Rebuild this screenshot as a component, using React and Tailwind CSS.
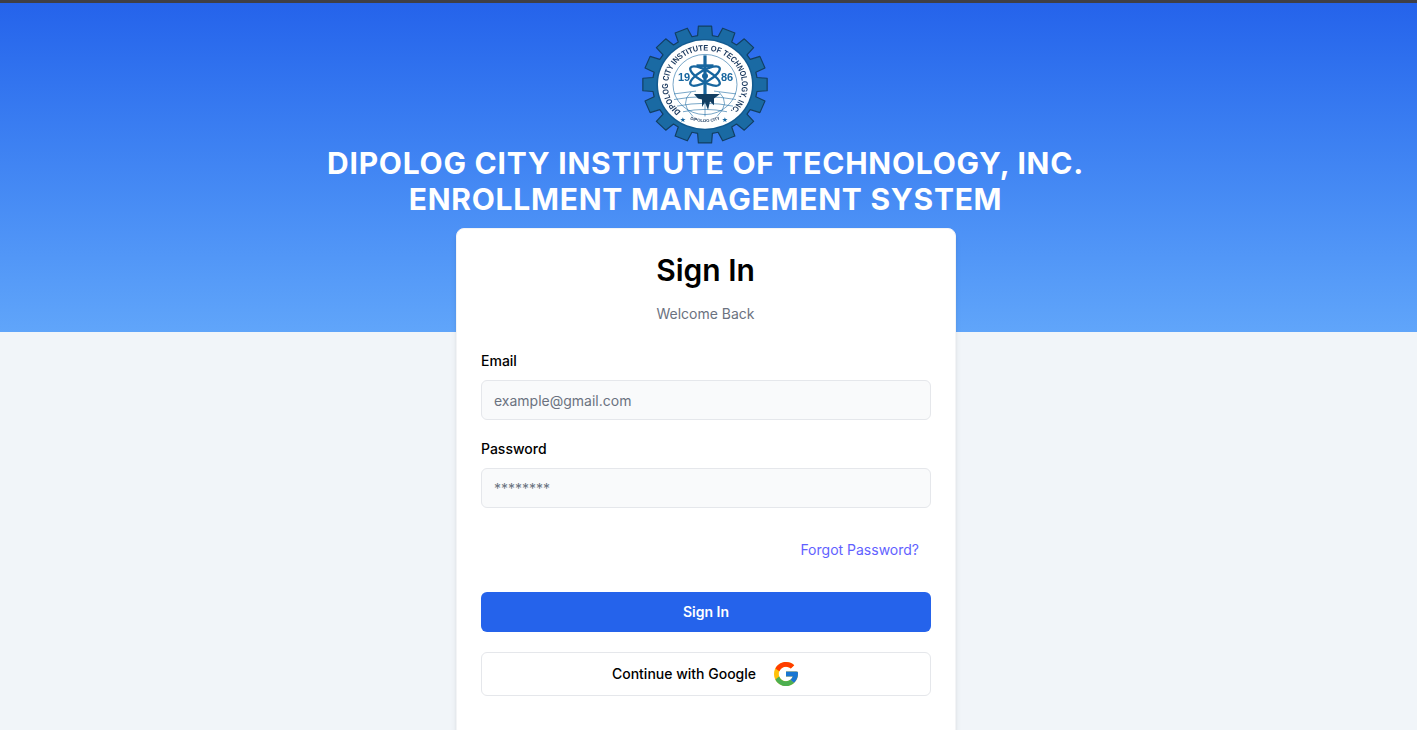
import React from 'react';

const gearPath = () => {
  const teeth = 16;
  const outer = 62.5;
  const root = 52.5;
  const pts = [];
  for (let i = 0; i < teeth; i++) {
    const a = (i / teeth) * Math.PI * 2 - Math.PI / 2;
    const step = (Math.PI * 2) / teeth;
    const p = (r, d) => `${(Math.cos(a + d) * r).toFixed(2)} ${(Math.sin(a + d) * r).toFixed(2)}`;
    pts.push(p(root, -step * 0.36), p(outer, -step * 0.27), p(outer, step * 0.27), p(root, step * 0.36));
  }
  return 'M' + pts.join('L') + 'Z';
};

const Logo = () => (
  <svg width="128" height="128" viewBox="-64 -64 128 128" className="block blur-[0.35px]">
    <defs>
      <path id="ringTop" d="M-24 29 A37 37 0 1 1 24 29" />
      <path id="ringBottom" d="M-15 37 A40 40 0 0 0 15 37" />
    </defs>
    <g transform="translate(-1 1.5) scale(1 0.94)">
      <path d={gearPath()} fill="#1a6aa3" stroke="#123f63" strokeWidth="1.2" strokeLinejoin="round" />
      <circle r="48.5" fill="#135a8f" />
      <circle r="47" fill="#ffffff" />
      <circle r="32" fill="none" stroke="#17669f" strokeWidth="0.6" />
      <text fontFamily="'Liberation Sans', sans-serif" fontWeight="700" fontSize="8.5" fill="#17365c">
        <textPath href="#ringTop" textLength="178" lengthAdjust="spacingAndGlyphs">DIPOLOG CITY INSTITUTE OF TECHNOLOGY, INC.</textPath>
      </text>
      <text fontFamily="'Liberation Sans', sans-serif" fontWeight="700" fontSize="4.4" fill="#17365c">
        <textPath href="#ringBottom" textLength="31" lengthAdjust="spacingAndGlyphs">DIPOLOG CITY</textPath>
      </text>
      <text x="-22" y="40" fontFamily="'DejaVu Sans', sans-serif" fontSize="7" fill="#17669f" textAnchor="middle">★</text>
      <text x="20" y="40" fontFamily="'DejaVu Sans', sans-serif" fontSize="7" fill="#17669f" textAnchor="middle">★</text>
      {/* globe */}
      <g fill="none" stroke="#17669f" strokeWidth="0.6">
        <path d="M-31 10 L-9 7 M9 7 L31 10 M-31 16 Q0 10 31 16 M-28 23 Q0 17 28 23 M-22 29 Q0 24 22 29" />
        <path d="M-14 8 Q-26 20 -12 34 M14 8 Q26 20 12 34 M0 10 L0 34" />
      </g>
      {/* cross and atom */}
      <g fill="none" stroke="#17669f">
        <path d="M0 -31 V14" strokeWidth="3.2" />
        <path d="M-8.5 -20 H8.5" strokeWidth="3" />
        <ellipse cx="0" cy="-9" rx="17" ry="6" strokeWidth="2.4" transform="rotate(32 0 -9)" />
        <ellipse cx="0" cy="-9" rx="17" ry="6" strokeWidth="2.4" transform="rotate(-32 0 -9)" />
      </g>
      <circle cy="-9" r="3" fill="#17669f" />
      <path d="M-11 10 L15 10 L9 15 L9 22 L5 18 L3 27 L0 19 L-3 24 L-3 16 L-7 15Z" fill="#123f63" />
      <text x="-21" y="-4" fontFamily="'Liberation Sans', sans-serif" fontSize="11" fontWeight="700" fill="#17669f" textAnchor="middle">19</text>
      <text x="22" y="-4" fontFamily="'Liberation Sans', sans-serif" fontSize="11" fontWeight="700" fill="#17669f" textAnchor="middle">86</text>
    </g>
  </svg>
);

const GoogleIcon = () => (
  <svg width="24" height="24" viewBox="4 4 40 40" className="block">
    <path fill="#FFC107" d="M43.6 20.1H42V20H24v8h11.3C33.7 32.7 29.2 36 24 36c-6.6 0-12-5.4-12-12s5.4-12 12-12c3.1 0 5.8 1.2 8 3l5.7-5.7C34 6.1 29.3 4 24 4 13 4 4 13 4 24s9 20 20 20 20-9 20-20c0-1.3-.1-2.7-.4-3.9z" />
    <path fill="#FF3D00" d="M6.3 14.7l6.6 4.8C14.7 15.1 19 12 24 12c3.1 0 5.8 1.2 8 3l5.7-5.7C34 6.1 29.3 4 24 4 16.3 4 9.7 8.3 6.3 14.7z" />
    <path fill="#4CAF50" d="M24 44c5.2 0 9.9-2 13.4-5.2l-6.2-5.2C29.2 35.1 26.7 36 24 36c-5.2 0-9.6-3.3-11.3-8l-6.5 5C9.5 39.6 16.2 44 24 44z" />
    <path fill="#1976D2" d="M43.6 20.1H42V20H24v8h11.3c-.8 2.2-2.2 4.2-4.1 5.6l6.2 5.2C37 39.2 44 34 44 24c0-1.3-.1-2.7-.4-3.9z" />
  </svg>
);

const Field = ({ label, placeholder, type }) => (
  <div>
    <label className="block text-sm font-medium leading-5 text-black mb-[9px]">{label}</label>
    <input
      type={type}
      placeholder={placeholder}
      className="w-full h-10 px-3 rounded-md border border-gray-200 bg-gray-50 text-sm placeholder:text-[#6b7280] outline-none"
    />
  </div>
);

const App = () => {
  return (
    <div className="h-screen overflow-hidden bg-[#f1f5f9] pr-[5px] font-['Inter',sans-serif]">
      <div className="h-[3px] bg-[#3f3f46] -mr-[5px]" />
      <div className="h-[329px] -mr-[5px] pr-[6px] bg-gradient-to-b from-[#2563eb] to-[#60a5fa] flex flex-col items-center pt-4">
        <Logo />
        <h1 className="-mt-[2px] text-[30px] leading-9 font-bold tracking-[0.025em] text-white text-center">
          DIPOLOG CITY INSTITUTE OF TECHNOLOGY, INC.
          <br />
          ENROLLMENT MANAGEMENT SYSTEM
        </h1>
      </div>
      <div className="relative z-10 -mt-[104px] mx-auto w-[500px] bg-white rounded-lg border border-gray-100 shadow-md px-6 pt-[23px] pb-10">
        <h2 className="pr-px text-[30px] leading-9 font-semibold text-black text-center">Sign In</h2>
        <p className="mt-4 pr-px text-sm leading-5 text-[#6b7280] text-center">Welcome Back</p>
        <div className="mt-[27px] flex flex-col gap-[19px]">
          <Field label="Email" placeholder="example@gmail.com" type="email" />
          <Field label="Password" placeholder="********" type="password" />
        </div>
        <div className="mt-[32px] flex justify-end pr-3">
          <a className="text-sm leading-5 text-indigo-500">Forgot Password?</a>
        </div>
        <button className="mt-[32px] w-full h-10 rounded-md bg-[#2563eb] text-white text-sm font-semibold">Sign In</button>
        <button className="mt-5 w-full h-11 pr-[2px] rounded-md border border-gray-200 bg-white flex items-center justify-center gap-[18px] text-sm font-medium text-black">
          Continue with Google
          <GoogleIcon />
        </button>
      </div>
    </div>
  );
};

export default App;
